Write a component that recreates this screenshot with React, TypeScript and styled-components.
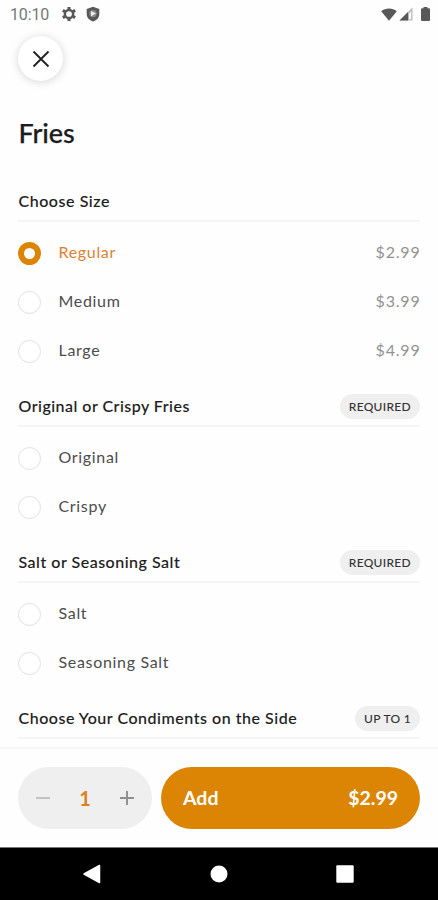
import React, { useState } from 'react';
import styled, { createGlobalStyle } from 'styled-components';

const GlobalStyle = createGlobalStyle`
  * { box-sizing: border-box; }
  body { margin: 0; background: #fefefe; }
  button { border: 0; padding: 0; background: none; font: inherit; color: inherit; cursor: pointer; }
`;

const Screen = styled.div`
  width: 438px;
  height: 900px;
  display: flex;
  flex-direction: column;
  overflow: hidden;
  background: #fefefe;
  color: #1c1c1c;
  font-family: Lato, sans-serif;
`;

const StatusBar = styled.header`
  flex: none;
  height: 28px;
  padding: 0 8px 0 10px;
  display: flex;
  align-items: center;
  justify-content: space-between;
  color: #585858;
`;

const StatusGroup = styled.div<{ $gap: number }>`
  display: flex;
  align-items: center;
  gap: ${(p) => p.$gap}px;
`;

const Clock = styled.span`
  width: 46px;
  padding-top: 2px;
  font: 400 16px/28px Roboto, sans-serif;
  letter-spacing: -0.15px;
  color: #777;
`;

const TopBar = styled.div`
  flex: none;
  height: 61px;
  padding: 8px 18px;
`;

const CloseButton = styled.button`
  width: 45px;
  height: 45px;
  display: grid;
  place-items: center;
  border-radius: 50%;
  background: #fff;
  box-shadow: 0 1px 9px rgba(0, 0, 0, 0.17);
`;

const Content = styled.main`
  flex: 1;
  min-height: 0;
  overflow: hidden;
  padding: 0 18px;
`;

const Title = styled.h1`
  height: 81px;
  margin: 0;
  padding: 26px 0 0 0.5px;
  font-size: 27px;
  line-height: 36px;
  font-weight: 500;
  letter-spacing: -0.1px;
  -webkit-text-stroke: 0.25px currentColor;
`;

const Section = styled.section``;

const SectionHeader = styled.div`
  height: 52px;
  padding: 18px 0 7px;
  margin-bottom: 6px;
  display: flex;
  align-items: center;
  justify-content: space-between;
  border-bottom: 2px solid #f5f5f5;
`;

const SectionTitle = styled.h2<{ $spacing: number }>`
  margin: 0;
  padding: 1px 0 0 0.5px;
  font-size: 16px;
  line-height: 24px;
  font-weight: 500;
  letter-spacing: ${(p) => p.$spacing}px;
  -webkit-text-stroke: 0.1px currentColor;
  white-space: nowrap;
`;

const Pill = styled.span`
  height: 25px;
  margin-top: 1px;
  padding: 0 9px;
  border-radius: 13px;
  background: #efefef;
  color: #333;
  font-size: 12px;
  line-height: 25px;
  font-weight: 500;
  letter-spacing: 0.3px;
`;

const Option = styled.div<{ $selected: boolean }>`
  height: 49px;
  padding-bottom: 1px;
  display: flex;
  align-items: center;
  color: ${(p) => (p.$selected ? '#dd8131' : '#4c4c4c')};
  font-size: 16px;
  line-height: 24px;
  letter-spacing: 0.68px;
  cursor: pointer;
`;

const Radio = styled.span<{ $selected: boolean }>`
  width: 23px;
  height: 23px;
  margin: 3px 17.5px 0 0;
  border-radius: 50%;
  border: ${(p) => (p.$selected ? '6.5px solid #dc8505' : '1.5px solid #e1e1e1')};
  background: #fff;
`;

const OptionPrice = styled.span`
  margin-left: auto;
  color: #929292;
  letter-spacing: 0.8px;
  margin-right: -0.5px;
`;

const Footer = styled.footer`
  flex: none;
  height: 100px;
  padding: 18px 18px;
  display: flex;
  gap: 9px;
  border-top: 2px solid #f6f6f6;
  background: #fefefe;
`;

const Stepper = styled.div`
  width: 134px;
  height: 62px;
  padding: 0 18px;
  display: flex;
  align-items: center;
  justify-content: space-between;
  border-radius: 31px;
  background: #efefef;
`;

const StepButton = styled.button<{ $muted: boolean }>`
  display: grid;
  color: ${(p) => (p.$muted ? '#bdbdbd' : '#8e8e8e')};
`;

const Quantity = styled.span`
  color: #db8220;
  font-size: 20px;
  line-height: 26px;
  font-weight: 700;
`;

const AddButton = styled.button`
  flex: 1;
  height: 62px;
  padding: 0 22px;
  display: flex;
  align-items: center;
  justify-content: space-between;
  border-radius: 31px;
  background: #dc8505;
  color: #fff;
  font-size: 19.5px;
  line-height: 26px;
  font-weight: 700;
`;

const NavBar = styled.nav`
  flex: none;
  height: 53px;
  padding: 0 84px 0 82px;
  display: flex;
  align-items: center;
  justify-content: space-between;
  background: #000;
  border-top: 1px solid #777;
`;

const sections = [
  {
    title: 'Choose Size',
    spacing: 0.55,
    options: [
      { name: 'Regular', price: '$2.99' },
      { name: 'Medium', price: '$3.99' },
      { name: 'Large', price: '$4.99' },
    ],
  },
  { title: 'Original or Crispy Fries', spacing: 0.48, badge: 'REQUIRED', options: [{ name: 'Original' }, { name: 'Crispy' }] },
  { title: 'Salt or Seasoning Salt', spacing: 0.51, badge: 'REQUIRED', options: [{ name: 'Salt' }, { name: 'Seasoning Salt' }] },
  { title: 'Choose Your Condiments on the Side', spacing: 0.53, badge: 'UP TO 1', options: [] },
] as { title: string; spacing: number; badge?: string; options: { name: string; price?: string }[] }[];

const GearIcon = () => (
  <svg width="16" height="16" viewBox="0 0 16 16">
    <g stroke="currentColor" fill="none">
      <circle cx="8" cy="8" r="4.1" strokeWidth="2.5" />
      <path
        d="M8 .9v2.4M8 12.7v2.4M1.85 4.45l2.1 1.2M12.05 10.35l2.1 1.2M1.85 11.55l2.1-1.2M12.05 5.65l2.1-1.2"
        strokeWidth="3.1"
      />
    </g>
  </svg>
);

const ShieldIcon = () => (
  <svg width="14" height="16" viewBox="0 0 14 16">
    <path
      d="M7 .7 13.3 3v5c0 3.6-2.5 6.3-6.3 7.5C3.2 14.3.7 11.6.7 8V3z"
      fill="currentColor"
    />
    <circle cx="7" cy="7.6" r="3.7" fill="#8a8a8a" />
    <path d="M5 5 10 7.6 5 10.2z" fill="#eee" />
  </svg>
);

const WifiIcon = () => (
  <svg width="16" height="13" viewBox="0 0 16 13">
    <path d="M.2 3.2C4.5-.5 11.5-.5 15.8 3.2L8 12.8z" fill="currentColor" />
  </svg>
);

const SignalIcon = () => (
  <svg width="14" height="14" viewBox="0 0 14 14">
    <path d="M13.5.5v13H.5z" fill="#b8b8b8" />
    <path d="M9 5v8.5H.5z" fill="currentColor" />
    <path d="M10 6.5 12.2 4v8.3H10z" fill="#fafafa" />
  </svg>
);

const BatteryIcon = () => (
  <svg width="9" height="14" viewBox="0 0 9 14">
    <path d="M2.5 0h4v1.3H8q1 0 1 1V13q0 1-1 1H1q-1 0-1-1V2.3q0-1 1-1h1.5z" fill="currentColor" />
  </svg>
);

export default function App() {
  const [chosen, setChosen] = useState<Record<string, string>>({ 'Choose Size': 'Regular' });
  const [quantity, setQuantity] = useState(1);

  return (
    <Screen>
      <GlobalStyle />
      <StatusBar>
        <StatusGroup $gap={9}>
          <StatusGroup $gap={5}>
            <Clock>10:10</Clock>
            <GearIcon />
          </StatusGroup>
          <ShieldIcon />
        </StatusGroup>
        <StatusGroup $gap={2}>
          <WifiIcon />
          <StatusGroup $gap={8}>
            <SignalIcon />
            <BatteryIcon />
          </StatusGroup>
        </StatusGroup>
      </StatusBar>
      <TopBar>
        <CloseButton aria-label="Close">
          <svg width="18" height="18" viewBox="0 0 18 18">
            <path d="M1.5 1.5l15 15M16.5 1.5l-15 15" stroke="#222" strokeWidth="1.9" />
          </svg>
        </CloseButton>
      </TopBar>
      <Content>
        <Title>Fries</Title>
        {sections.map((section) => (
          <Section key={section.title}>
            <SectionHeader>
              <SectionTitle $spacing={section.spacing}>{section.title}</SectionTitle>
              {section.badge && <Pill>{section.badge}</Pill>}
            </SectionHeader>
            {section.options.map((option) => {
              const selected = chosen[section.title] === option.name;
              return (
                <Option
                  key={option.name}
                  $selected={selected}
                  onClick={() => setChosen({ ...chosen, [section.title]: option.name })}
                >
                  <Radio $selected={selected} />
                  {option.name}
                  {option.price && <OptionPrice>{option.price}</OptionPrice>}
                </Option>
              );
            })}
          </Section>
        ))}
      </Content>
      <Footer>
        <Stepper>
          <StepButton $muted aria-label="Decrease" onClick={() => setQuantity(Math.max(1, quantity - 1))}>
            <svg width="14" height="14" viewBox="0 0 14 14">
              <path d="M0 7h14" stroke="currentColor" strokeWidth="1.8" />
            </svg>
          </StepButton>
          <Quantity>{quantity}</Quantity>
          <StepButton $muted={false} aria-label="Increase" onClick={() => setQuantity(quantity + 1)}>
            <svg width="14" height="14" viewBox="0 0 14 14">
              <path d="M0 7h14M7 0v14" stroke="currentColor" strokeWidth="1.9" />
            </svg>
          </StepButton>
        </Stepper>
        <AddButton>
          <span>Add</span>
          <span>${(2.99 * quantity).toFixed(2)}</span>
        </AddButton>
      </Footer>
      <NavBar>
        <svg width="19" height="20" viewBox="0 0 19 20">
          <path d="M2 10 17.5 1.5v17z" fill="#fff" stroke="#fff" strokeWidth="1.5" strokeLinejoin="round" />
        </svg>
        <svg width="18" height="18" viewBox="0 0 18 18">
          <circle cx="9" cy="9" r="8.5" fill="#fff" />
        </svg>
        <svg width="18" height="18" viewBox="0 0 18 18">
          <rect x=".3" y=".3" width="17.4" height="17.4" rx="1" fill="#fff" />
        </svg>
      </NavBar>
    </Screen>
  );
}
